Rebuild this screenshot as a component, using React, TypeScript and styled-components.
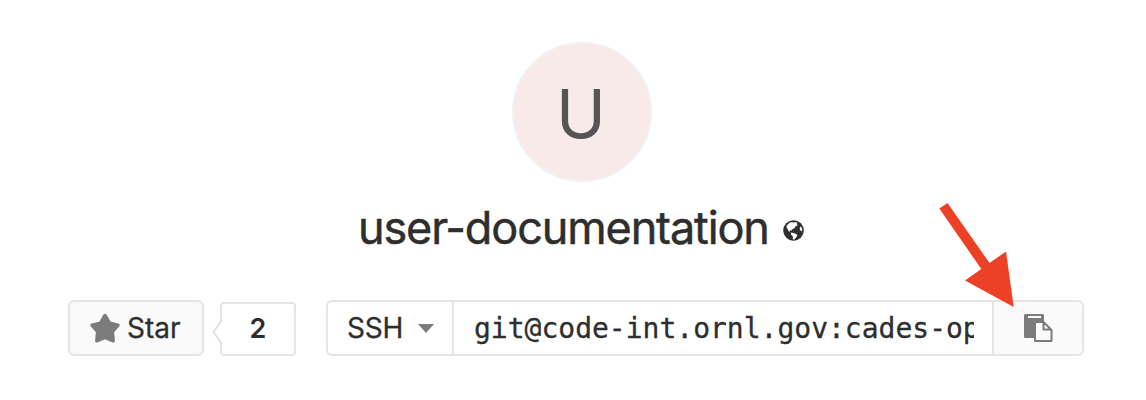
import React from 'react';
import styled, { createGlobalStyle } from 'styled-components';

const GlobalStyle = createGlobalStyle`
  * { box-sizing: border-box; }
  body { margin: 0; background: #fff; }
`;

const Page = styled.main`
  width: 1146px;
  height: 400px;
  padding: 42px 62px 0 68px;
  overflow: hidden;
  background: #fff;
  color: #2e2e2e;
  font-family: Inter, 'Liberation Sans', sans-serif;
  position: relative;
`;

const Avatar = styled.div`
  width: 140px;
  height: 140px;
  margin-left: 444px;
  border: 2px solid #f2f2f2;
  border-radius: 50%;
  background: #f7eae9;
  color: #555;
  display: flex;
  align-items: center;
  justify-content: center;
  font-size: 67px;
  line-height: 136px;
  padding: 4px 2px 0 0;
`;

const TitleRow = styled.div`
  display: flex;
  align-items: center;
  height: 60px;
  margin: 16px 0 0 290px;
`;

const Title = styled.h1`
  margin: 0;
  width: 425px;
  font-size: 45px;
  line-height: 60px;
  font-weight: 400;
  letter-spacing: -1.12px;
  -webkit-text-stroke: 0.5px currentColor;
  white-space: nowrap;
`;

const Globe = styled.svg`
  width: 21px;
  height: 21px;
  margin-top: 4px;
`;

const Actions = styled.div`
  display: flex;
  align-items: flex-start;
  margin-top: 42px;
`;

const StarButton = styled.button`
  width: 136px;
  height: 56px;
  padding: 0 0 0 19px;
  display: flex;
  align-items: center;
  border: 2px solid #e5e5e5;
  border-radius: 6px;
  background: #fafafa;
  color: inherit;
  font: 400 28px/52px Inter, 'Liberation Sans', sans-serif;
  -webkit-text-stroke: 0.3px currentColor;
`;

const StarIcon = styled.svg`
  flex: none;
  width: 32px;
  height: 32px;
  margin: 0 6px 1px 0;
  fill: #7b7b7b;
  stroke: #7b7b7b;
`;

const Count = styled.div`
  position: relative;
  width: 76px;
  height: 54px;
  margin: 2px 30px 0 16px;
  border: 2px solid #e5e5e5;
  border-radius: 4px;
  font-size: 27px;
  font-weight: 600;
  line-height: 50px;
  text-align: center;
`;

const Notch = styled.svg`
  position: absolute;
  left: -10px;
  top: 14px;
  width: 11px;
  height: 28px;
`;

const CloneGroup = styled.div`
  display: flex;
  width: 758px;
  height: 56px;
  border: 2px solid #e5e5e5;
  border-radius: 6px;
  overflow: hidden;
`;

const Protocol = styled.button`
  width: 126px;
  padding: 0 0 0 19px;
  display: flex;
  align-items: center;
  border: 0;
  border-right: 2px solid #e5e5e5;
  background: #fff;
  color: inherit;
  font: 400 28px/52px Inter, 'Liberation Sans', sans-serif;
  letter-spacing: -0.2px;
  -webkit-text-stroke: 0.3px currentColor;
`;

const Caret = styled.span`
  margin-left: 15px;
  border: 8px solid transparent;
  border-top: 9px solid #7b7b7b;
  border-bottom: 0;
`;

const Url = styled.div`
  width: 538px;
  padding: 1px 18px 0 20px;
  font: 28px/52px 'DejaVu Sans Mono', monospace;
  -webkit-text-stroke: 0.3px currentColor;
`;

const UrlText = styled.div`
  overflow: hidden;
  white-space: nowrap;
`;

const CopyButton = styled.button`
  flex: 1;
  padding: 0;
  border: 0;
  border-left: 2px solid #e5e5e5;
  background: #fafafa;
  display: flex;
  align-items: center;
  justify-content: center;
`;

const Pointer = styled.svg`
  position: absolute;
  left: 930px;
  top: 195px;
  width: 100px;
  height: 120px;
`;

export default function App() {
  return (
    <>
      <GlobalStyle />
      <Page>
        <Avatar>U</Avatar>
        <TitleRow>
          <Title>user-documentation</Title>
          <Globe viewBox="0 0 21 21">
            <circle cx="10.5" cy="10.5" r="10.3" fill="#2e2e2e" />
            <path
              d="M3.2 6.2 6.4 2.7 9.2 2l1.5.8 1.4-.8 2.2.8-.5 1.5 1 1-2.5 1.2-.7 1.6-2.2 1.2-.8 1.2-1-.3-1.2.8 1.1 1.4 1.8.3 2.8.9 1.900.9.4 1-1.500 2.200-1.500 1.700-1.500.2-.1-3.300-1.900-1.900.2-1.300-2.600-2.200Z"
              fill="#fff"
            />
            <path d="m16.800 7.200 1.300-.6 1.100 2.700-.2 2-1.200-.2-.9-1.500Z" fill="#fff" />
          </Globe>
        </TitleRow>
        <Actions>
          <StarButton>
            <StarIcon viewBox="0 0 32 32">
              <path
                d="M16 3.500 20.500 11.200 29 13.100 23.300 19.600 24.200 28.800 16 25.500 7.800 28.800 8.700 19.600 3 13.100 11.500 11.200Z"
                strokeWidth="3.500"
                strokeLinejoin="round"
              />
            </StarIcon>
            Star
          </StarButton>
          <Count>
            2
            <Notch viewBox="0 0 11 28">
              <path d="M11 2 1.5 14 11 26Z" fill="#fff" />
              <path d="M10 2 1.5 14 10 26" fill="none" stroke="#e2e2e6" strokeWidth="2" />
            </Notch>
          </Count>
          <CloneGroup>
            <Protocol>
              SSH
              <Caret />
            </Protocol>
            <Url>
              <UrlText>git@code-int.ornl.gov:cades-ops/user-documentation.git</UrlText>
            </Url>
            <CopyButton aria-label="Copy URL">
              <svg width="29" height="29" viewBox="0 0 29 29">
                <path
                  d="M1.5 0h17Q20 0 20 1.5V7h-8.500Q10 7 10 8.500V24H1.500Q0 24 0 22.500V1.500Q0 0 1.500 0ZM4 2v2h13V2Z"
                  fill="#7b7b7b"
                  fillRule="evenodd"
                />
                <path
                  d="M11 8.500Q11 8 11.500 8H19.500l8 8v10.500Q27.500 27 27 27h-15.500Q11 27 11 26.500ZM19.500 8v7.500H27.500"
                  fill="#fafafa"
                  stroke="#7b7b7b"
                  strokeWidth="2"
                  strokeLinejoin="round"
                />
              </svg>
            </CopyButton>
          </CloneGroup>
        </Actions>
        <Pointer viewBox="930 195 100 120">
          <path d="M939.300 208.500 947.500 203 989.500 263 1006 251.500 1013.700 307 965 280.500 981.300 269Z" fill="#ec4127" />
        </Pointer>
      </Page>
    </>
  );
}
